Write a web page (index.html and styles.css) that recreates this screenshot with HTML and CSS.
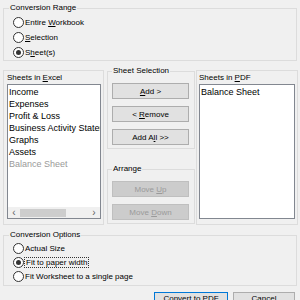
FILE: index.html
```html
<!DOCTYPE html>
<html lang="en">
<head>
  <meta charset="UTF-8">
  <title>Convert to PDF</title>
  <link rel="stylesheet" href="styles.css">
</head>
<body>
  <div class="dialog">
    <!-- 변환 범위 -->
    <fieldset class="group range">
      <legend>Conversion Range</legend>
      <div class="radio"><span class="circle"></span><span>Entire <u>W</u>orkbook</span></div>
      <div class="radio"><span class="circle"></span><span><u>S</u>election</span></div>
      <div class="radio"><span class="circle checked"></span><span>S<u>h</u>eet(s)</span></div>
    </fieldset>

    <div class="middle">
      <div class="panel">
        <div class="panel-title">Sheets in <u>E</u>xcel</div>
        <div class="list">
          <div class="items">
            <div>Income</div>
            <div>Expenses</div>
            <div>Profit &amp; Loss</div>
            <div>Business Activity Statement</div>
            <div>Graphs</div>
            <div>Assets</div>
            <div class="muted">Balance Sheet</div>
          </div>
          <div class="hscroll">
            <span class="arrow">&lsaquo;</span>
            <span class="track"><span class="thumb"></span></span>
            <span class="arrow">&rsaquo;</span>
          </div>
        </div>
      </div>

      <div class="center">
        <fieldset class="group selection">
          <legend>Sheet Selection</legend>
          <button class="btn"><u>A</u>dd &gt;</button>
          <button class="btn">&lt; <u>R</u>emove</button>
          <button class="btn">Add A<u>l</u>l &gt;&gt;</button>
        </fieldset>
        <fieldset class="group arrange">
          <legend>Arrange</legend>
          <button class="btn" disabled>Move <u>U</u>p</button>
          <button class="btn" disabled>Move <u>D</u>own</button>
        </fieldset>
      </div>

      <div class="panel pdf">
        <div class="panel-title">Sheets in <u>P</u>DF</div>
        <div class="list">
          <div class="items">
            <div>Balance Sheet</div>
          </div>
        </div>
      </div>
    </div>

    <!-- 변환 옵션 -->
    <fieldset class="group options">
      <legend>Conversion Options</legend>
      <div class="radio"><span class="circle"></span><span>Actual Size</span></div>
      <div class="radio"><span class="circle checked"></span><span class="focus">Fit to paper width</span></div>
      <div class="radio"><span class="circle"></span><span>Fit Worksheet to a single page</span></div>
    </fieldset>

    <div class="actions">
      <button class="btn default">Convert to PDF</button>
      <button class="btn cancel">Cancel</button>
    </div>
  </div>
</body>
</html>
```

FILE: styles.css
```css
/* 전체 배경 및 폰트 */
body {
  margin: 0;
  background: #f0f0f0;
  font-family: "Liberation Sans", Arial, sans-serif;
  font-size: 8px;
  color: #000;
  overflow: hidden;
}

.dialog {
  width: 294px;
  height: 300px;
  padding: 3px 4px 0 3px;
}

/* 그룹 박스 */
.group {
  margin: 0;
  min-width: 0;
  border: 1px solid #dcdcdc;
  padding: 0 4px;
}
.group legend {
  padding: 0 1px;
  line-height: 10px;
  height: 10px;
}

.range {
  padding: 2px 0 0 9px;
}
.range legend,
.options legend {
  margin-left: -4px;
}

/* 라디오 버튼 */
.radio {
  display: flex;
  align-items: center;
  height: 15px;
  white-space: nowrap;
}
.circle {
  width: 9px;
  height: 9px;
  border: 1px solid #333;
  border-radius: 50%;
  background: #fff;
  margin-right: 1px;
  display: flex;
  align-items: center;
  justify-content: center;
  flex: none;
}
.circle.checked::after {
  content: "";
  width: 5px;
  height: 5px;
  border-radius: 50%;
  background: #333;
}
.focus {
  outline: 1px dotted #333;
  outline-offset: 0;
  padding: 0 1px;
}

/* 가운데 영역 */
.middle {
  display: grid;
  grid-template-columns: 101px 87px 101px;
  column-gap: 3px;
  margin-top: 5px;
}
.middle > .center {
  margin-right: -1px;
}
.middle > .pdf {
  margin-left: -1px;
}

.panel {
  margin-top: 4px;
  border: 1px solid #dcdcdc;
  padding: 2px 2px 4px 3px;
  height: 147px;
}
.panel.pdf {
  padding-left: 2px;
}
.panel-title {
  line-height: 10px;
  height: 10px;
  margin-bottom: 1px;
  white-space: nowrap;
}

.list {
  height: 133px;
  border: 1px solid #828790;
  background: #fff;
  display: flex;
  flex-direction: column;
  overflow: hidden;
}
.items {
  flex: 1;
  padding: 1px 0 0 1px;
  font-size: 9px;
  line-height: 12px;
  white-space: nowrap;
  overflow: hidden;
}
.items .muted {
  color: #9a9a9a;
}

.hscroll {
  height: 11px;
  display: flex;
  align-items: center;
  background: #f0f0f0;
}
.arrow {
  width: 12px;
  text-align: center;
  font-size: 10px;
  line-height: 10px;
  color: #606060;
}
.track {
  flex: 1;
  display: flex;
  align-items: center;
  height: 100%;
}
.thumb {
  width: 46px;
  height: 8px;
  background: #cdcdcd;
}

/* 버튼 */
.btn {
  display: block;
  width: 77px;
  height: 16px;
  padding: 0;
  font-family: inherit;
  font-size: 8px;
  color: #000;
  background: #e1e1e1;
  border: 1px solid #adadad;
}
.btn:disabled {
  background: #cccccc;
  border-color: #bfbfbf;
  color: #9a9a9a;
}

.selection {
  padding: 7px 4px 3px;
}
.selection .btn + .btn {
  margin-top: 7px;
}
.arrange {
  margin-top: 15px;
  padding: 7px 4px 3px;
}
.arrange .btn + .btn {
  margin-top: 7px;
}

/* 변환 옵션 */
.options {
  margin-top: 5px;
  padding: 1px 0 2px 9px;
}
.options .radio {
  height: 14px;
}

/* 하단 버튼 (창 아래로 잘림) */
.actions {
  display: flex;
  justify-content: flex-end;
  gap: 5px;
  margin-top: 6px;
  padding-right: 2px;
}
.actions .btn {
  height: 13px;
  line-height: 11px;
}
.actions .default {
  width: 74px;
  border-color: #0078d7;
}
.actions .cancel {
  width: 62px;
}
```
